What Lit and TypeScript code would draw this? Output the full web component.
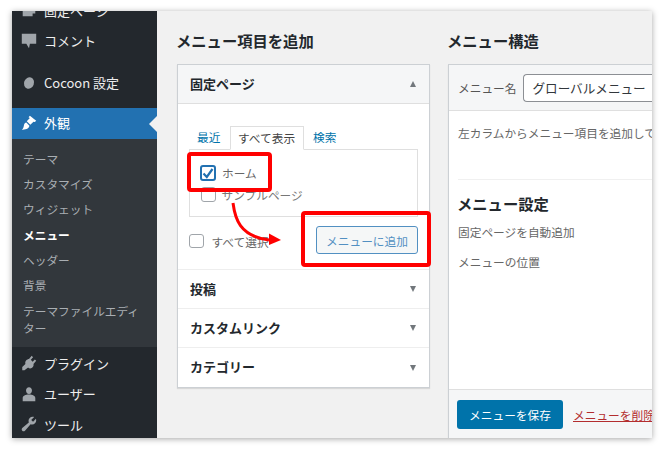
import { LitElement, html, css, svg } from "lit";
import { customElement } from "lit/decorators.js";

const icons: Record<string, any> = {
  pages: svg`<path d="M6 1h11v14h-3v3H3V5h3z" fill="currentColor"/>`,
  comment: svg`<path d="M2 2h16v11h-7l-1 5-3-5H2z" fill="currentColor"/>`,
  cocoon: svg`<ellipse cx="10" cy="10" rx="5.500" ry="6.500" transform="rotate(20 10 10)" fill="currentColor"/>`,
  brush: svg`<path d="M9.500 3.500 11 2l7 5.500-1.500 1.500-1.500-.5-3.500 3.500-4-4 3.500-3.500zM7 9.500l3.500 3.500c-.5 3.500-5 4.500-8.500 4.500 2-1.500 2-3 2.500-5.500.3-1.200 1.200-2.200 2.500-2.500z" fill="currentColor"/>`,
  plugin: svg`<path d="M13 2l1.500 1.500-2.500 3L14 8.500l2.500-2.500L18 7.500l-3 3.500c.5 2-.5 3.500-2 4.500-1.500 1-3 .5-4-.5L5 18H2.500v-3.500L6 11c-.5-1.500 0-3 1-4 .8-.8 2-1.500 3-1.500z" fill="currentColor"/>`,
  user: svg`<path d="M10 2.500c2 0 3.300 1.500 3.300 3.500S12 10 10 10 6.700 8 6.700 6 8 2.500 10 2.500zM10 10.500c4 0 7 1.500 7 4V18H3v-3.500c0-2.500 3-4 7-4z" fill="currentColor"/>`,
  tool: svg`<path d="M18 6c0 2.500-2 4.500-4.500 4.500-.6 0-1.200-.1-1.700-.3L5.500 17.500c-.8.800-2.200.8-3 0s-.8-2.200 0-3l7.300-6.300c-.2-.5-.3-1.100-.3-1.700C9.500 4 11.500 2 14 2c.6 0 1.200.1 1.700.3L12.500 5.500l2 2 3.200-3.200c.2.500.3 1.100.3 1.700z" fill="currentColor"/>`,
};

@customElement("app-root")
export class AppRoot extends LitElement {
  static styles = css`
    :host { display: block; width: 664px; height: 451px; background: #fff; overflow: hidden;
      font-family: "Noto Sans CJK JP", "Noto Sans", sans-serif; font-size: 13px; color: #444; }
    * { box-sizing: border-box; }
    .page { position: relative; width: 664px; height: 451px; padding: 11px 12px 13px; }
    .win { display: flex; width: 640px; height: 427px; overflow: hidden; box-shadow: 0 1px 6px rgba(0,0,0,.35); background: #f1f1f1; }
    .side { width: 145px; flex: none; background: #23282d; color: #eee; }
    .item { display: flex; align-items: center; gap: 6px; padding-left: 8px; height: 30.500px; }
    .item svg { width: 18px; height: 18px; color: #a0a5aa; flex: none; }
    .cut { height: 15px; align-items: flex-start; overflow: hidden; }
    .cut span { margin-top: -10px; line-height: 19px; }
    .cut svg { margin-top: -11px; }
    .item.c { height: 29px; }
    .gap { height: 13px; }
    .gap.b { height: 11px; }
    .item.active { background: #2271b1; color: #fff; position: relative; height: 31px; padding-bottom: 2px; }
    .item.active svg { color: #fff; }
    .item.active::after { content: ""; position: absolute; right: 0; top: 8px; border: 8px solid transparent; border-right-color: #f1f1f1; border-left-width: 0; }
    .sub { background: #32373c; padding: 8px 0 0 11px; color: #a9aeb3; height: 208px; font-size: 11.700px; }
    .sub div { line-height: 18px; padding: 3px 0; height: 25.200px; }
    .sub .cur { color: #fff; font-weight: 600; }
    .sub .two { height: auto; line-height: 16.500px; padding: 5px 10px 0 0; }
    .after { padding-top: 1px; }
    .main { flex: 1; display: flex; min-width: 0; padding-left: 20px; gap: 18px; }
    .col1 { width: 253px; flex: none; }
    h2 { margin: 0 0 0 -1px; font-size: 15.300px; line-height: 20px; padding-top: 19px; height: 53px; font-weight: 700; color: #23282d; }
    .acc { background: #fff; border: 1px solid #ccd0d4; box-shadow: 0 1px 1px rgba(0,0,0,.1); height: 324px; display: flex; flex-direction: column; }
    .ahead { display: flex; justify-content: space-between; align-items: center; padding: 0 13px 2px 12px; height: 39px; font-weight: 700; color: #23282d; border-bottom: 1px solid #eee; font-size: 13px; flex: none; }
    .ahead.open { background: #f5f6f7; border-bottom-color: #dfdfdf; }
    .ahead.last { border-bottom: none; }
    .tri { width: 0; height: 0; border: 4px solid transparent; border-left-width: 3.500px; border-right-width: 3.500px; position: relative; top: 1px; }
    .up { border-bottom: 6px solid #72777c; border-top-width: 0; }
    .down { border-top: 6px solid #72777c; border-bottom-width: 0; }
    .abody { flex: none; height: 166px; padding: 22px 11px 0; border-bottom: 1px solid #eee; font-size: 11.700px; }
    .tabs { display: flex; height: 23px; color: #0073aa; line-height: 22px; }
    .tabs span { padding: 0 9px; }
    .tabs .on { color: #444; background: #fff; border: 1px solid #dfdfdf; border-bottom: 1px solid #fff; height: 24px; padding: 0 7px; position: relative; z-index: 1; width: 74px; white-space: nowrap; }
    .tabs span:first-child { width: 41px; padding: 0 0 0 8px; }
    .box { height: 68px; border: 1px solid #dfdfdf; padding: 14px 0 0 10px; }
    .row { display: flex; align-items: center; gap: 6px; height: 17px; white-space: nowrap; margin-bottom: 5px; color: #666; }
    .row.s2 { margin-bottom: 0; color: #777; }
    .row.s2 .cb { margin-left: 1px; }
    .cb { width: 14.500px; height: 14.500px; border: 1px solid #a0a5aa; border-radius: 3px; background: #fff; flex: none; display: flex; align-items: center; justify-content: center; }
    .cb.on { width: 16px; height: 16px; border: 2px solid #2271b1; }
    .cb svg { width: 12px; height: 12px; }
    .acts { display: flex; justify-content: space-between; align-items: center; margin-top: 9px; }
    .all { display: flex; gap: 8px; align-items: center; color: #666; white-space: nowrap; margin-top: 2px; }
    .btn { display: flex; align-items: center; justify-content: center; width: 102px; height: 28px; background: #f3f5f6; border: 1px solid #2271b1; border-radius: 3px; color: #2271b1; opacity: .78; }
    .col2 { flex: 1; min-width: 0; display: flex; flex-direction: column; }
    .panel { flex: 1; width: 300px; background: #fff; border: 1px solid #ccd0d4; border-bottom: none; border-right: none; display: flex; flex-direction: column; box-shadow: 0 1px 1px rgba(0,0,0,.1); }
    .phead { height: 46px; background: #f5f6f7; border-bottom: 1px solid #dfdfdf; display: flex; align-items: center; padding-left: 9px; gap: 7px; flex: none; font-size: 11.700px; color: #555; white-space: nowrap; }
    .input { width: 150px; height: 28px; border: 1px solid #8c8f94; border-radius: 4px 0 0 4px; border-right: none; background: #fff; padding-left: 8px; line-height: 26px; font-size: 12.600px; color: #32373c; }
    .pbody { flex: 1; padding: 0 0 0 9px; overflow: hidden; white-space: nowrap; font-size: 11.700px; color: #666; }
    .pbody p { margin: 0; line-height: 18px; }
    .pbody p.hint { padding: 13px 0 0; height: 69px; border-bottom: 1px solid #f0f0f0; }
    h3 { margin: 0 0 0 -1px; font-size: 15.300px; color: #23282d; font-weight: 700; line-height: 20px; padding-top: 13px; height: 41px; }
    .pbody p.l2 { margin-top: 2px; }
    .pbody p.l3 { margin-top: 12px; }
    .pfoot { height: 49px; flex: none; background: #f5f6f7; border-top: 1px solid #dfdfdf; display: flex; align-items: center; padding-left: 8px; gap: 10px; white-space: nowrap; font-size: 11.700px; }
    .save { width: 106px; height: 29px; background: #0073aa; border-radius: 3px; color: #fff; display: flex; align-items: center; justify-content: center; flex: none; }
    .del { color: #b32d2e; text-decoration: underline; }
    .red { position: absolute; border: 4px solid #f00; border-radius: 4px; pointer-events: none; }
    .r1 { left: 187px; top: 152px; width: 85px; height: 40px; }
    .r2 { left: 301px; top: 211px; width: 130px; height: 56px; }
    .arrow { position: absolute; left: 225px; top: 198px; width: 65px; height: 50px; pointer-events: none; }
  `;

  item(icon: string, label: string, cls = "") {
    return html`<div class="item ${cls}"><svg viewBox="0 0 20 20">${icons[icon]}</svg><span>${label}</span></div>`;
  }

  render() {
    const check = html`<svg viewBox="0 0 12 12"><path d="M1.500 6.500 4.800 10 10.500 2" fill="none" stroke="#2271b1" stroke-width="2.200"/></svg>`;
    return html`<div class="page">
      <div class="win">
        <div class="side">
          ${this.item("pages", "固定ページ", "cut")}
          ${this.item("comment", "コメント", "c")}
          <div class="gap"></div>
          ${this.item("cocoon", "Cocoon 設定", "c")}
          <div class="gap b"></div>
          ${this.item("brush", "外観", "active")}
          <div class="sub">
            <div>テーマ</div><div>カスタマイズ</div><div>ウィジェット</div>
            <div class="cur">メニュー</div><div>ヘッダー</div><div>背景</div>
            <div class="two">テーマファイルエディター</div>
          </div>
          <div class="after">
            ${this.item("plugin", "プラグイン")}
            ${this.item("user", "ユーザー")}
            ${this.item("tool", "ツール")}
          </div>
        </div>
        <div class="main">
          <div class="col1">
            <h2>メニュー項目を追加</h2>
            <div class="acc">
              <div class="ahead open">固定ページ<i class="tri up"></i></div>
              <div class="abody">
                <div class="tabs"><span>最近</span><span class="on">すべて表示</span><span>検索</span></div>
                <div class="box">
                  <div class="row"><span class="cb on">${check}</span>ホーム</div>
                  <div class="row s2"><span class="cb"></span>サンプルページ</div>
                </div>
                <div class="acts">
                  <div class="all"><span class="cb"></span>すべて選択</div>
                  <div class="btn">メニューに追加</div>
                </div>
              </div>
              <div class="ahead">投稿<i class="tri down"></i></div>
              <div class="ahead">カスタムリンク<i class="tri down"></i></div>
              <div class="ahead last">カテゴリー<i class="tri down"></i></div>
            </div>
          </div>
          <div class="col2">
            <h2>メニュー構造</h2>
            <div class="panel">
              <div class="phead">メニュー名<div class="input">グローバルメニュー</div></div>
              <div class="pbody">
                <p class="hint">左カラムからメニュー項目を追加してください。</p>
                <h3>メニュー設定</h3>
                <p class="l2">固定ページを自動追加</p>
                <p class="l3">メニューの位置</p>
              </div>
              <div class="pfoot"><div class="save">メニューを保存</div><span class="del">メニューを削除</span></div>
            </div>
          </div>
        </div>
      </div>
      <div class="red r1"></div>
      <div class="red r2"></div>
      <svg class="arrow" viewBox="0 0 65 50"><path d="M8 5C10 20 14 38 44 42" fill="none" stroke="#f00" stroke-width="3"/><path d="M44 35.500 56 42 44 47z" fill="#f00"/></svg>
    </div>`;
  }
}
